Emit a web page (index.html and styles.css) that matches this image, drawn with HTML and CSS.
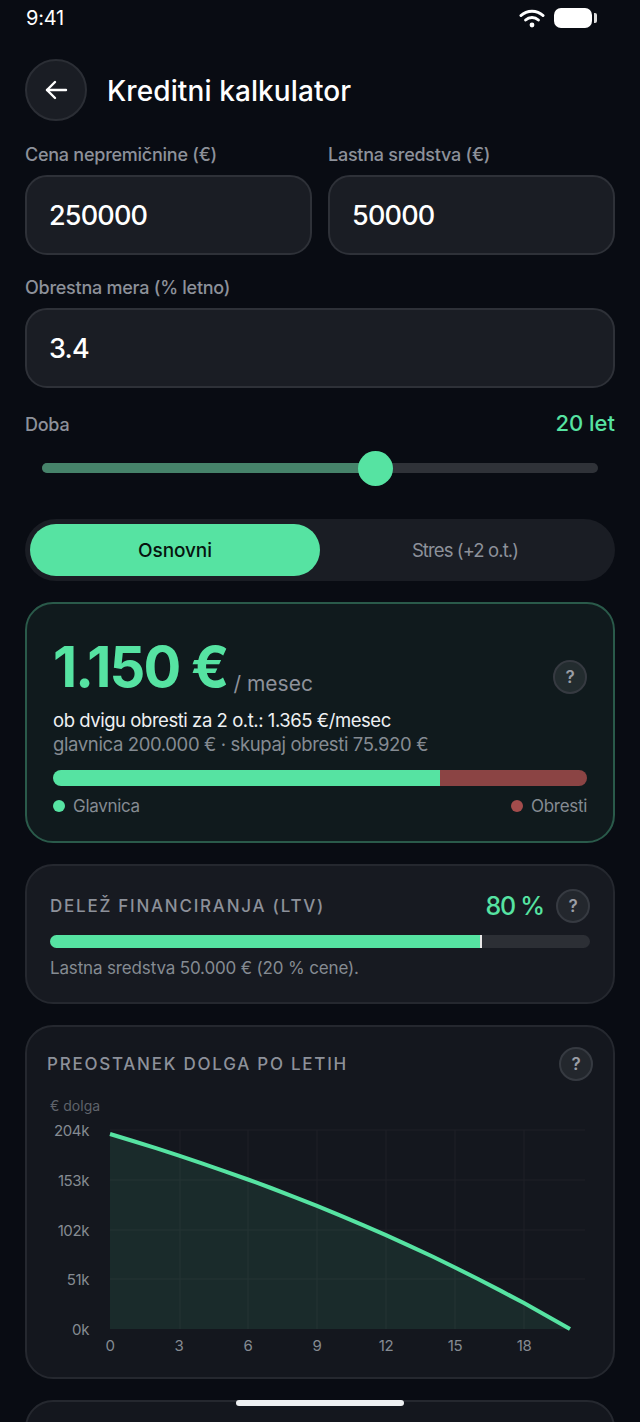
FILE: index.html
```html
<!DOCTYPE html>
<html lang="sl">
<head>
  <meta charset="UTF-8">
  <title>Kreditni kalkulator</title>
  <link rel="stylesheet" href="styles.css">
</head>
<body>
  <div class="status">
    <span class="time">9:41</span>
    <div class="status-icons">
      <svg width="26" height="20" viewBox="0 0 26 20" fill="none" stroke="#fff" stroke-width="3" stroke-linecap="round">
        <path d="M2 7.5C8 1.7 18 1.7 24 7.5"/>
        <path d="M6.6 12C10.2 8.7 15.8 8.7 19.4 12"/>
        <circle cx="13" cy="17" r="2.4" fill="#fff" stroke="none"/>
      </svg>
      <div class="battery"></div>
      <div class="battery-cap"></div>
    </div>
  </div>

  <header class="top">
    <div class="back">
      <svg width="24" height="24" viewBox="0 0 24 24" fill="none" stroke="#fff" stroke-width="2.4" stroke-linecap="round" stroke-linejoin="round">
        <path d="M22 12H3"/>
        <path d="M11 4L3 12L11 20"/>
      </svg>
    </div>
    <h1>Kreditni kalkulator</h1>
  </header>

  <main class="content">
    <div class="row">
      <div class="field">
        <label>Cena nepremičnine (€)</label>
        <div class="input">250000</div>
      </div>
      <div class="field">
        <label>Lastna sredstva (€)</label>
        <div class="input">50000</div>
      </div>
    </div>

    <div class="field field-rate">
      <label>Obrestna mera (% letno)</label>
      <div class="input">3.4</div>
    </div>

    <div class="term">
      <label>Doba</label>
      <span class="term-value">20 let</span>
    </div>
    <div class="slider">
      <div class="slider-fill"></div>
      <div class="slider-thumb"></div>
    </div>

    <div class="tabs">
      <div class="tab active">Osnovni</div>
      <div class="tab">Stres (+2 o.t.)</div>
    </div>

    <section class="card hero">
      <div class="hero-top">
        <div class="amount-line">
          <span class="amount">1.150 €</span>
          <span class="per">/ mesec</span>
        </div>
        <div class="help">?</div>
      </div>
      <p class="stress">ob dvigu obresti za 2 o.t.: 1.365 €/mesec</p>
      <p class="totals">glavnica 200.000 € · skupaj obresti 75.920 €</p>
      <div class="split">
        <div class="split-main"></div>
        <div class="split-rest"></div>
      </div>
      <div class="legend">
        <span class="legend-item"><i class="dot dot-green"></i>Glavnica</span>
        <span class="legend-item"><i class="dot dot-red"></i>Obresti</span>
      </div>
    </section>

    <section class="card ltv">
      <div class="card-head">
        <h2>Delež financiranja (LTV)</h2>
        <div class="ltv-right">
          <span class="ltv-value">80 %</span>
          <div class="help">?</div>
        </div>
      </div>
      <div class="ltv-bar">
        <div class="ltv-fill"></div>
      </div>
      <p class="note">Lastna sredstva 50.000 € (20 % cene).</p>
    </section>

    <section class="card chart-card">
      <div class="card-head">
        <h2>Preostanek dolga po letih</h2>
        <div class="help">?</div>
      </div>
      <div class="axis-title">€ dolga</div>
      <svg class="chart" width="546" height="238" viewBox="0 0 546 238">
        <g class="grid">
          <path d="M63 10H538M63 60H538M63 110H538M63 159H538"/>
          <path d="M133 10V209M201 10V209M270 10V209M339 10V209M408 10V209M477 10V209"/>
        </g>
        <path class="area" d="M63 14L86 21L109 28.2L132 35.6L155 43.3L178 51.3L201 59.5L224 68L247 76.8L270 85.9L293 95.4L316 105.1L339 115.2L362 125.6L385 136.3L408 147.5L431 159L454 170.9L477 183.1L500 195.9L523 209H63Z"/>
        <path class="line" d="M63 14L86 21L109 28.2L132 35.6L155 43.3L178 51.3L201 59.5L224 68L247 76.8L270 85.9L293 95.4L316 105.1L339 115.2L362 125.6L385 136.3L408 147.5L431 159L454 170.9L477 183.1L500 195.9L523 209"/>
        <g class="y-labels">
          <text x="42" y="16">204k</text>
          <text x="42" y="66">153k</text>
          <text x="42" y="116">102k</text>
          <text x="42" y="165">51k</text>
          <text x="42" y="215">0k</text>
        </g>
        <g class="x-labels">
          <text x="63" y="231">0</text>
          <text x="132" y="231">3</text>
          <text x="201" y="231">6</text>
          <text x="270" y="231">9</text>
          <text x="339" y="231">12</text>
          <text x="408" y="231">15</text>
          <text x="477" y="231">18</text>
        </g>
      </svg>
    </section>

    <section class="card next"></section>
  </main>

  <div class="home-bar"></div>
</body>
</html>
```

FILE: styles.css
```css
* {
  box-sizing: border-box;
}
html, body {
  margin: 0;
  height: 1422px;
  overflow: hidden;
}
body {
  position: relative;
  font-family: Inter, "Noto Sans", sans-serif;
  background-color: #090c13;
  color: #ffffff;
}
h1, h2, p {
  margin: 0;
}

.status {
  height: 36px;
  padding: 0 43px 0 26px;
  display: flex;
  justify-content: space-between;
  align-items: center;
}
.time {
  font-size: 20px;
  letter-spacing: -0.2px;
}
.status-icons {
  display: flex;
  align-items: center;
}
.status-icons svg {
  margin-right: 9px;
}
.battery {
  width: 38px;
  height: 20px;
  background-color: #fff;
  border-radius: 7px;
}
.battery-cap {
  width: 3px;
  height: 10px;
  margin-left: 2px;
  background-color: #ddd;
  border-radius: 0 2px 2px 0;
}

.top {
  margin-top: 23px;
  padding: 0 25px;
  display: flex;
  align-items: center;
  gap: 20px;
}
.back {
  width: 62px;
  height: 62px;
  border-radius: 50%;
  background-color: #1a1d24;
  border: 2px solid #2b2e35;
  display: flex;
  align-items: center;
  justify-content: center;
}
h1 {
  margin-top: 2px;
  font-size: 28px;
  font-weight: 500;
  letter-spacing: 0.1px;
}

.content {
  padding: 0 25px;
}
.row {
  display: grid;
  grid-template-columns: 287px 287px;
  gap: 16px;
  margin-top: 22px;
}
label {
  display: block;
  font-size: 18px;
  line-height: 24px;
  color: #8d919a;
  font-weight: 500;
  letter-spacing: -0.25px;
}
.input {
  margin-top: 8px;
  height: 80px;
  padding: 0 22px;
  display: flex;
  align-items: center;
  background-color: #1a1d24;
  border: 2px solid #2e3138;
  border-radius: 22px;
  font-size: 27px;
  font-weight: 500;
  letter-spacing: -0.8px;
}
.field-rate {
  margin-top: 21px;
}

.term {
  margin-top: 25px;
  display: flex;
  justify-content: space-between;
  align-items: center;
}
.term-value {
  font-size: 22px;
  font-weight: 500;
  color: #56e3a2;
  margin-top: -4px;
}
.slider {
  position: relative;
  margin: 26px 17px 0;
  height: 10px;
  border-radius: 5px;
  background-color: #2f3238;
}
.slider-fill {
  width: 60%;
  height: 100%;
  border-radius: 5px 0 0 5px;
  background-color: #46836a;
}
.slider-thumb {
  position: absolute;
  left: 316px;
  top: -12px;
  width: 35px;
  height: 35px;
  border-radius: 50%;
  background-color: #56e3a2;
}

.tabs {
  margin-top: 46px;
  height: 62px;
  padding: 5px;
  display: flex;
  border-radius: 31px;
  background-color: #1a1d24;
}
.tab {
  width: 290px;
  display: flex;
  align-items: center;
  justify-content: center;
  font-size: 18.5px;
  color: #8d919a;
  border-radius: 26px;
  letter-spacing: -0.9px;
}
.tab.active {
  background-color: #56e3a2;
  color: #07140e;
  font-size: 19px;
  font-weight: 500;
  letter-spacing: -0.1px;
}

.card {
  margin-top: 21px;
  border: 2px solid #25282f;
  border-radius: 28px;
  background-color: #171a21;
}
.help {
  width: 34px;
  height: 34px;
  flex: none;
  border-radius: 50%;
  display: flex;
  align-items: center;
  justify-content: center;
  background-color: #23272d;
  border: 2px solid #363a41;
  color: #9a9ea6;
  font-size: 17px;
  font-weight: 600;
}

.hero {
  height: 241px;
  padding: 26px 26px 0;
  border-color: #2a5a4a;
  background-color: #101a1d;
}
.hero-top {
  display: flex;
  justify-content: space-between;
  align-items: center;
  height: 74px;
}
.amount-line {
  display: flex;
  align-items: flex-end;
  gap: 6px;
}
.amount {
  font-size: 56px;
  line-height: 56px;
  font-weight: 700;
  letter-spacing: -1.8px;
  color: #56e3a2;
}
.per {
  font-size: 21px;
  line-height: 22px;
  color: #8d919a;
}
.hero-top .help {
  margin-top: 20px;
  background-color: #232c2f;
}
.stress {
  margin-top: 4px;
  font-size: 18.5px;
  line-height: 24px;
  letter-spacing: -0.45px;
  color: #eef0f2;
}
.totals {
  font-size: 18.5px;
  line-height: 24px;
  letter-spacing: -0.37px;
  color: #858b92;
}
.split {
  margin-top: 14px;
  height: 16px;
  display: flex;
  border-radius: 8px;
  overflow: hidden;
}
.split-main {
  width: 387px;
  background-color: #56e3a2;
}
.split-rest {
  flex: 1;
  background-color: #8b4444;
}
.legend {
  margin-top: 9px;
  display: flex;
  justify-content: space-between;
  font-size: 17px;
  line-height: 22px;
  letter-spacing: -0.3px;
  color: #858b92;
}
.legend-item {
  display: flex;
  align-items: center;
  gap: 8px;
}
.dot {
  width: 12px;
  height: 12px;
  border-radius: 50%;
}
.dot-green {
  background-color: #56e3a2;
}
.dot-red {
  background-color: #a34c4c;
}

.card-head {
  display: flex;
  justify-content: space-between;
  align-items: center;
}
h2 {
  font-size: 17px;
  font-weight: 500;
  letter-spacing: 1.75px;
  text-transform: uppercase;
  color: #8d919a;
}

.ltv {
  height: 140px;
  padding: 23px 23px 0;
}
.ltv-right {
  display: flex;
  align-items: center;
  gap: 12px;
}
.ltv-value {
  font-size: 25px;
  font-weight: 500;
  letter-spacing: -1.2px;
  color: #56e3a2;
}
.ltv-bar {
  margin-top: 12px;
  height: 13px;
  border-radius: 7px;
  background-color: #2c2f35;
  overflow: hidden;
}
.ltv-fill {
  width: 432px;
  height: 100%;
  background-color: #56e3a2;
  border-right: 2px solid #e8e8e8;
}
.note {
  margin-top: 9px;
  font-size: 17px;
  line-height: 22px;
  letter-spacing: -0.15px;
  color: #858b92;
}

.chart-card {
  height: 354px;
  padding: 20px 20px 0;
  background-color: #14171e;
}
.axis-title {
  margin: 16px 0 0 3px;
  font-size: 14px;
  line-height: 18px;
  color: #5f636b;
}
.chart {
  display: block;
  margin-top: 5px;
}
.grid path {
  stroke: #1e2127;
  stroke-width: 1;
  fill: none;
}
.area {
  fill: rgba(86, 227, 162, 0.1);
}
.line {
  fill: none;
  stroke: #56e3a2;
  stroke-width: 4;
  stroke-linejoin: round;
}
.chart text {
  font-family: Inter, "Noto Sans", sans-serif;
  font-size: 15px;
  letter-spacing: -0.4px;
  fill: #858b92;
}
.y-labels text {
  text-anchor: end;
}
.x-labels text {
  text-anchor: middle;
}

.next {
  height: 60px;
  background-color: #14171e;
}

.home-bar {
  position: absolute;
  left: 236px;
  top: 1400px;
  width: 168px;
  height: 6px;
  border-radius: 3px;
  background-color: #eef0f2;
}
```
